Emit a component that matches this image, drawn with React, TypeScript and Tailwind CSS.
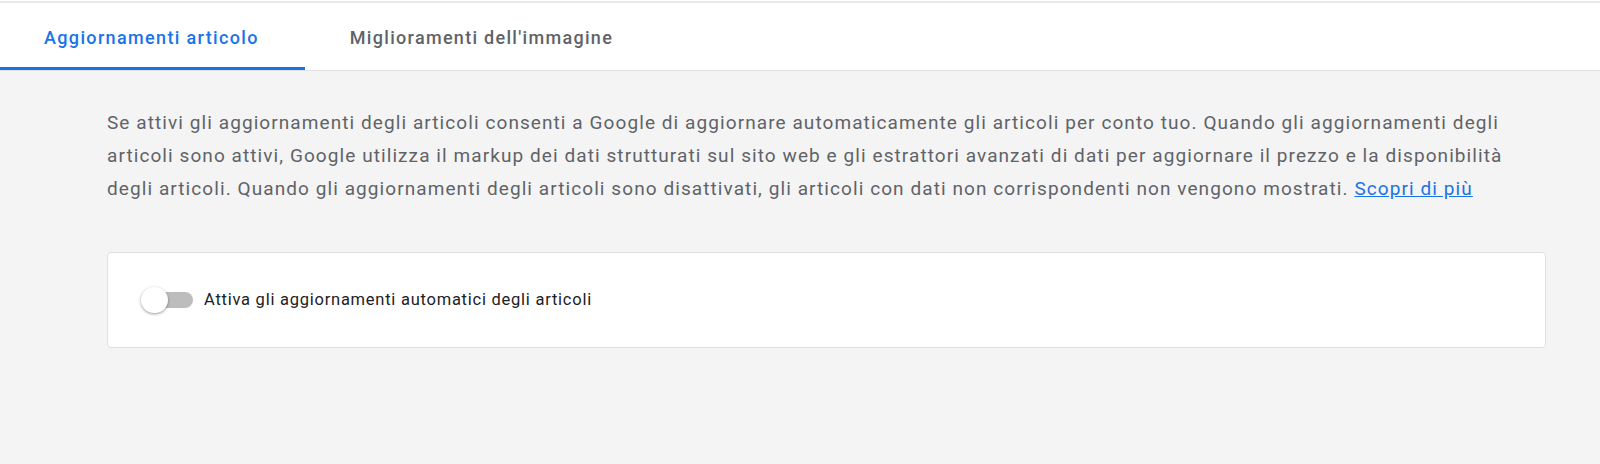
import React from "react";

export default function App() {
  return (
    <div className="min-h-[464px] w-full bg-[#f4f4f4]" style={{ fontFamily: "Roboto, 'Liberation Sans', sans-serif" }}>
      <div className="bg-white pt-[1px]">
        <div className="border-t-2 border-[#e9e9e9]" />
        <div className="flex h-[68px] border-b border-[#e3e3e3]">
          <button className="flex h-full items-center border-b-[3px] border-[#1a73e8] pl-[44px] pr-[46px] pt-[4px] text-[18px] font-medium tracking-[1.35px] text-[#1a73e8]">
            Aggiornamenti articolo
          </button>
          <button className="flex h-full items-center border-b-[3px] border-transparent pl-[45px] pr-[44px] pt-[4px] text-[18px] font-medium tracking-[1.3px] text-[#5f6368]">
            Miglioramenti dell'immagine
          </button>
        </div>
      </div>
      <div className="pl-[107px] pr-[54px] pt-[35px]">
        <p className="whitespace-nowrap text-[19px] leading-[33px] tracking-[1.08px] text-[#5f6368]">
          Se attivi gli aggiornamenti degli articoli consenti a Google di aggiornare automaticamente gli articoli per conto tuo. Quando gli aggiornamenti degli
          <br />
          articoli sono attivi, Google utilizza il markup dei dati strutturati sul sito web e gli estrattori avanzati di dati per aggiornare il prezzo e la disponibilità
          <br />
          degli articoli. Quando gli aggiornamenti degli articoli sono disattivati, gli articoli con dati non corrispondenti non vengono mostrati.{" "}
          <a href="#" className="text-[#1a73e8] underline">Scopri di più</a>
        </p>
        <div className="mt-[47px] flex h-[96px] items-center rounded-[4px] border border-[#e0e0e0] bg-white pl-[33px]">
          <div className="relative h-[26px] w-[52px] shrink-0">
            <div className="absolute left-[7px] top-[5px] h-[16px] w-[45px] rounded-full bg-[#bdbdbd]" />
            <div className="absolute left-0 top-0 h-[26px] w-[27px] rounded-full bg-white shadow-[0_1px_3px_rgba(0,0,0,0.4)]" />
          </div>
          <span className="ml-[11px] text-[16.5px] tracking-[0.75px] text-[#202124]">Attiva gli aggiornamenti automatici degli articoli</span>
        </div>
      </div>
    </div>
  );
}
